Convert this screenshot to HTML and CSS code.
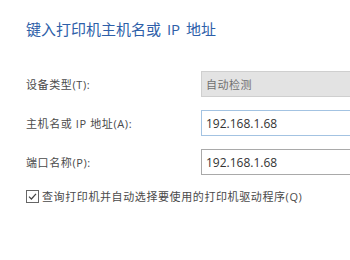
FILE: index.html
```html
<!DOCTYPE html>
<html lang="zh-CN">
<head>
    <meta charset="UTF-8">
    <title>添加打印机</title>
    <link rel="stylesheet" href="styles.css">
</head>
<body>

<div class="wizard">
    <!-- Page heading -->
    <h1 class="heading">键入打印机主机名或 IP 地址</h1>

    <!-- Form rows -->
    <div class="form">
        <label class="label" for="type">设备类型(T):</label>
        <div class="field combo" id="type">自动检测</div>

        <label class="label" for="host">主机名或 IP 地址(A):</label>
        <input class="field input focused" id="host" type="text" value="192.168.1.68">

        <label class="label" for="port">端口名称(P):</label>
        <input class="field input" id="port" type="text" value="192.168.1.68">
    </div>

    <label class="check">
        <svg class="check-box" width="13" height="13" viewBox="0 0 13 13">
            <rect x="0.5" y="0.5" width="12" height="12" fill="#fff" stroke="#666"/>
            <path d="M3 6.6 L5.4 9 L10 3.8" fill="none" stroke="#444" stroke-width="1.2"/>
        </svg>
        <span>查询打印机并自动选择要使用的打印机驱动程序(Q)</span>
    </label>
</div>

</body>
</html>
```

FILE: styles.css
```css
/* Reset */
* {
    margin: 0;
    padding: 0;
    box-sizing: border-box;
}

html,
body {
    overflow: hidden;
    background-color: #fff;
}

body {
    font-family: "Open Sans", "Noto Sans CJK SC", sans-serif;
    color: #4a4a4a;
    width: 350px;
    height: 260px;
}

/* Wizard page */
.wizard {
    padding: 19px 0 0 26px;
}

.heading {
    font-size: 15px;
    font-weight: normal;
    line-height: 20px;
    word-spacing: 2px;
    color: #2e5fa9;
    margin-bottom: 32px;
}

/* Form grid */
.form {
    display: grid;
    grid-template-columns: 175px 1fr;
    grid-auto-rows: 26px;
    row-gap: 13px;
    align-items: center;
}

.label {
    font-size: 11px;
    letter-spacing: 0.6px;
    color: #4a4a4a;
}

.field {
    height: 26px;
    width: 100%;
    padding: 0 4px;
    display: flex;
    align-items: center;
    font-family: inherit;
    border: 1px solid #a9a9a9;
    border-right: none;
    outline: none;
}

.combo {
    background-color: #e3e3e3;
    border-color: #cfcfcf;
    color: #707070;
    font-size: 11px;
    letter-spacing: 0.5px;
}

.input {
    font-size: 12px;
    color: #333;
    background-color: #fff;
}

.input.focused {
    border-color: #a3c3e2;
}

/* Checkbox row */
.check {
    display: flex;
    align-items: center;
    gap: 3px;
    margin-top: 15px;
    line-height: 13px;
    font-size: 11px;
    letter-spacing: 0.6px;
    color: #4a4a4a;
}

.check-box {
    flex-shrink: 0;
}
```
